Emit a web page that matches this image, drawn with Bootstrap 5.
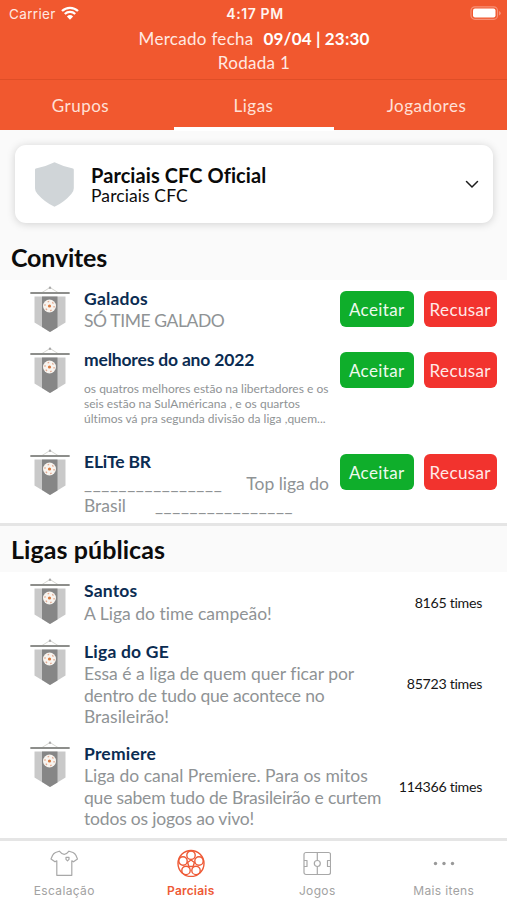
<!DOCTYPE html>
<html lang="pt-BR">
<head>
<meta charset="utf-8">
<meta name="viewport" content="width=device-width, initial-scale=1">
<title>Parciais CFC</title>
<link href="https://cdn.jsdelivr.net/npm/bootstrap@5.3.0/dist/css/bootstrap.min.css" rel="stylesheet">
<style>
  body { font-family: Lato, "Open Sans", sans-serif; background: #fafafa; color: #0c0c0c; height: 900px; overflow: hidden; }
  .app { width: 507px; height: 900px; overflow: hidden; }
  .topbar { background: #f1582f; height: 130px; color: #ffe9e2; }
  .statusbar { height: 27px; padding: 1px 6px 0 9px; font-family: Inter, sans-serif; font-size: 13.5px; line-height: 26px; }
  .statusbar .side { flex: 1 1 0; }
  .statusbar svg { margin-top: -2px; }
  .clock { font-weight: 600; font-size: 14px; letter-spacing: .6px; color: #fff4f0; }
  .carrier { letter-spacing: .35px; }
  .market { font-size: 17px; line-height: 24px; letter-spacing: .3px; padding-left: 1px; }
  .market b { font-weight: 700; color: #fff; margin-left: 10px; letter-spacing: .15px; }
  .top-rule { height: 1px; background: #df4e27; margin-top: 4px; }
  .toptabs { margin: 0 -6px; }
  .toptabs .nav-link { height: 50px; padding: 0; line-height: 51px; color: #ffe0d7; font-size: 17px; letter-spacing: .5px; text-align: center; }
  .toptabs .nav-link span { display: block; height: 51px; width: 160px; margin: 0 auto; }
  .toptabs .nav-link.active span { border-bottom: 4px solid #fff; }
  .league-card { margin: 15px 14px 0 15px; height: 78px; border: 0; border-radius: 11px; box-shadow: 0 1px 9px rgba(0,0,0,.17); padding: 0 14px 0 20px; }
  .league-card .names { margin-left: 17px; padding-top: 2px; }
  .league-card h1 { font-size: 20px; line-height: 22px; font-weight: 700; margin: 0; color: #0a0a0a; letter-spacing: .08px; }
  .league-card p { font-size: 17.5px; line-height: 20px; margin: 0; letter-spacing: .1px; }
  .sect-title { font-size: 25px; font-weight: 700; margin: 0; padding-left: 11px; }
  .st-a { height: 57px; line-height: 68px; letter-spacing: -.19px; }
  .st-b { height: 46px; line-height: 46px; letter-spacing: .07px; }
  .rows { background: #fff; font-variant-ligatures: none; }
  .item { padding: 0 10px 0 30px; }
  .h-a { height: 61px; } .h-b { height: 102px; } .h-c { height: 80px; } .h-d { height: 103px; }
  .pennant { width: 40px; height: 48px; margin: 6px 14px 0 0; flex: none; }
  .item .body-col { width: 0; flex: 1 1 0; }
  .item h3 { font-size: 17.5px; line-height: 22px; font-weight: 700; margin: 8px 0 0; color: #0b2c52; letter-spacing: .2px; }
  .item p { font-size: 17.5px; line-height: 21.5px; margin: 0; color: #8f9395; white-space: pre; }
  .item p.fine { font-size: 12px; line-height: 15px; margin-top: 10px; letter-spacing: .02px; }
  .item p.single { padding-top: 1px; }
  .item .tight { letter-spacing: -.18px; }
  .item .tighter { letter-spacing: -.41px; }
  .dash { letter-spacing: .61px; }
  .gap-a { margin-left: 24px; } .gap-b { margin-left: 29px; }
  .acts { margin: 11px 0 0; gap: 10px; }
  .acts .btn { width: 73.5px; height: 36px; padding: 0; border: 0; border-radius: 6px; color: #eefaee; font-size: 17px; line-height: 37px; letter-spacing: .38px; }
  .acts .btn-yes { background: #0fae2b; }
  .acts .btn-no { background: #f2332e; color: #ffe9e7; }
  .count { font-size: 14.2px; padding-right: 15px; color: #161616; letter-spacing: -.3px; }
  .bar { height: 3px; background: #e5e5e5; }
  .botnav { background: #fff; height: 59px; padding-left: 1px; font-family: Inter, sans-serif; font-size: 12px; color: #a2a2a2; letter-spacing: .36px; }
  .botnav svg { display: block; margin: 8px auto 5px; fill: none; stroke: #a8a8a8; stroke-width: 1.2; stroke-linejoin: round; }
  .botnav .col { line-height: 18px; text-align: center; }
  .botnav .on { color: #ee5a36; font-weight: 600; letter-spacing: .2px; }
  .botnav .on svg { stroke: #ee5a36; stroke-width: 1.4; }
</style>
<script src="https://cdn.jsdelivr.net/npm/bootstrap@5.3.0/dist/js/bootstrap.bundle.min.js"></script>
</head>
<body>
<svg class="d-none" xmlns="http://www.w3.org/2000/svg">
  <symbol id="pennant" viewBox="0 0 40 48">
    <path d="M12 6.500L20 1.500l8 5" fill="none" stroke="#c6c6be" stroke-width=".7"/>
    <circle cx="20" cy="1.800" r="1.200" fill="#aaa"/>
    <rect x=".3" y="6" width="39.400" height="2" rx=".5" fill="#8d8e8b"/>
    <path d="M4.500 10.500h31v26L20 46 4.500 36.500z" fill="#c9c9c9"/>
    <path d="M12 10.500h15.500v30.900L20 46l-8-4.900z" fill="#868686"/>
    <circle cx="19.500" cy="20" r="6.500" fill="#f8f4ef"/>
    <circle cx="19.500" cy="20" r="4.600" fill="none" stroke="#e2aa92" stroke-width="1.300" stroke-dasharray="1.600 3.200"/>
    <circle cx="19.500" cy="20" r="1.600" fill="#d9793f"/>
  </symbol>
</svg>
<div class="app d-flex flex-column">
  <header class="topbar">
    <div class="statusbar d-flex align-items-center">
      <div class="side d-flex align-items-center"><span class="carrier">Carrier</span>
        <svg class="ms-1" width="20" height="14" viewBox="-1 0 20 14"><path d="M1 5a11.600 11.600 0 0 1 16 0M3.800 8a7.600 7.600 0 0 1 10.400 0" fill="none" stroke="#fff" stroke-width="2.300"/><path d="M9 13.700L5.900 10.500a4.500 4.500 0 0 1 6.200 0z" fill="#fff"/></svg>
      </div>
      <span class="clock">4:17 PM</span>
      <div class="side d-flex justify-content-end">
        <svg width="31" height="15" viewBox="0 0 31 15"><rect x="1" y=".8" width="26.500" height="12.500" rx="3.800" fill="none" stroke="#f79077" stroke-width="1.200"/><rect x="3" y="2.600" width="22.500" height="8.900" rx="2" fill="#fff"/><path d="M29 5v4.600q1.800-.8 1.800-2.300T29 5z" fill="#f79077"/></svg>
      </div>
    </div>
    <div class="market text-center">Mercado fecha<b>09/04 | 23:30</b></div>
    <div class="market text-center">Rodada 1</div>
    <div class="top-rule"></div>
    <nav class="nav toptabs row g-0">
      <a class="nav-link col"><span>Grupos</span></a>
      <a class="nav-link col active"><span>Ligas</span></a>
      <a class="nav-link col"><span>Jogadores</span></a>
    </nav>
  </header>
  <section class="card league-card flex-row align-items-center">
    <svg width="39" height="45" viewBox="0 0 39 45"><path d="M19.500.3Q29 5 38 6.500q.8.200.8 1.200v18.500q0 3-2.300 5.500Q29 40.500 19.500 44.700 10 40.500 2.300 31.700 0 29.200 0 26.200V7.700q0-1 .8-1.200Q10 5 19.500.3z" fill="#d0d5d8"/></svg>
    <div class="names flex-grow-1"><h1>Parciais CFC Oficial</h1><p>Parciais CFC</p></div>
    <svg width="14" height="9" viewBox="0 0 14 9"><path d="M1.500 1.500L7 7l5.500-5.500" fill="none" stroke="#1c1c1c" stroke-width="1.500" stroke-linecap="round"/></svg>
  </section>
  <h2 class="sect-title st-a">Convites</h2>
  <section class="rows">
    <div class="item d-flex h-a"><svg class="pennant"><use href="#pennant"/></svg>
      <div class="body-col"><h3>Galados</h3><p class="tighter">SÓ TIME GALADO</p></div>
      <div class="acts d-flex"><button class="btn btn-yes">Aceitar</button><button class="btn btn-no">Recusar</button></div></div>
    <div class="item d-flex h-b"><svg class="pennant"><use href="#pennant"/></svg>
      <div class="body-col"><h3 class="tight">melhores do ano 2022</h3><p class="fine">os quatros melhores estão na libertadores e os
seis estão na SulAméricana , e os quartos
últimos vá pra segunda divisão da liga ,quem...</p></div>
      <div class="acts d-flex"><button class="btn btn-yes">Aceitar</button><button class="btn btn-no">Recusar</button></div></div>
    <div class="item d-flex h-c"><svg class="pennant"><use href="#pennant"/></svg>
      <div class="body-col"><h3 class="tight">ELiTe BR</h3><p><span class="dash">________________</span><span class="gap-a">Top liga do</span>
Brasil<span class="dash gap-b">________________</span></p></div>
      <div class="acts d-flex"><button class="btn btn-yes">Aceitar</button><button class="btn btn-no">Recusar</button></div></div>
  </section>
  <div class="bar"></div>
  <h2 class="sect-title st-b">Ligas públicas</h2>
  <section class="rows">
    <div class="item d-flex h-a"><svg class="pennant"><use href="#pennant"/></svg>
      <div class="body-col"><h3>Santos</h3><p class="single">A Liga do time campeão!</p></div><div class="count align-self-center">8165 times</div></div>
    <div class="item d-flex h-b"><svg class="pennant"><use href="#pennant"/></svg>
      <div class="body-col"><h3>Liga do GE</h3><p>Essa é a liga de quem quer ficar por
<span class="tight">dentro de tudo que acontece no</span>
Brasileirão!</p></div><div class="count align-self-center">85723 times</div></div>
    <div class="item d-flex h-d"><svg class="pennant"><use href="#pennant"/></svg>
      <div class="body-col"><h3>Premiere</h3><p>Liga do canal Premiere. Para os mitos
<span class="tight">que sabem tudo de Brasileirão e curtem</span>
<span class="tight">todos os jogos ao vivo!</span></p></div><div class="count align-self-center">114366 times</div></div>
  </section>
  <div class="bar"></div>
  <nav class="botnav row g-0">
    <div class="col"><svg width="28" height="28" viewBox="0 0 28 28"><path d="M9.300 2.200L5.500 3.500Q3.500 4.500 2.500 6.500L1 10l4 2.800 1.800-1V26.300h15V11.800l1.700 1 4-2.800-1.500-3.500q-1-2-3-3l-4-1.300Q14.300 8.500 9.300 2.200z"/><path d="M16 8.300h3v2l-1.500 1.500L16 10.300z" stroke-width="1.200"/></svg>Escalação</div>
    <div class="col on"><svg width="28" height="28" viewBox="0 0 28 28"><circle cx="14" cy="14.500" r="13"/><circle cx="14" cy="6.200" r="4.200"/><circle cx="22" cy="12" r="4.200"/><circle cx="19" cy="21.400" r="4.200"/><circle cx="9" cy="21.400" r="4.200"/><circle cx="6" cy="12" r="4.200"/><path d="M14 11l3.400 2.500-1.300 4h-4.200l-1.300-4z"/></svg>Parciais</div>
    <div class="col"><svg width="28" height="28" viewBox="0 0 28 28"><rect x="1" y="3.500" width="26.500" height="22" rx="2"/><path d="M14.300 3.500v8M14.300 17.500v8M1 11.500h3v6H1M27.500 11.500h-3v6h3"/><circle cx="14.300" cy="14.500" r="3"/></svg>Jogos</div>
    <div class="col"><svg width="28" height="28" viewBox="0 0 28 28"><g fill="#999" stroke="none"><circle cx="5.500" cy="14.500" r="1.700"/><circle cx="14" cy="14.500" r="1.700"/><circle cx="22.500" cy="14.500" r="1.700"/></g></svg>Mais itens</div>
  </nav>
</div>
</body>
</html>
